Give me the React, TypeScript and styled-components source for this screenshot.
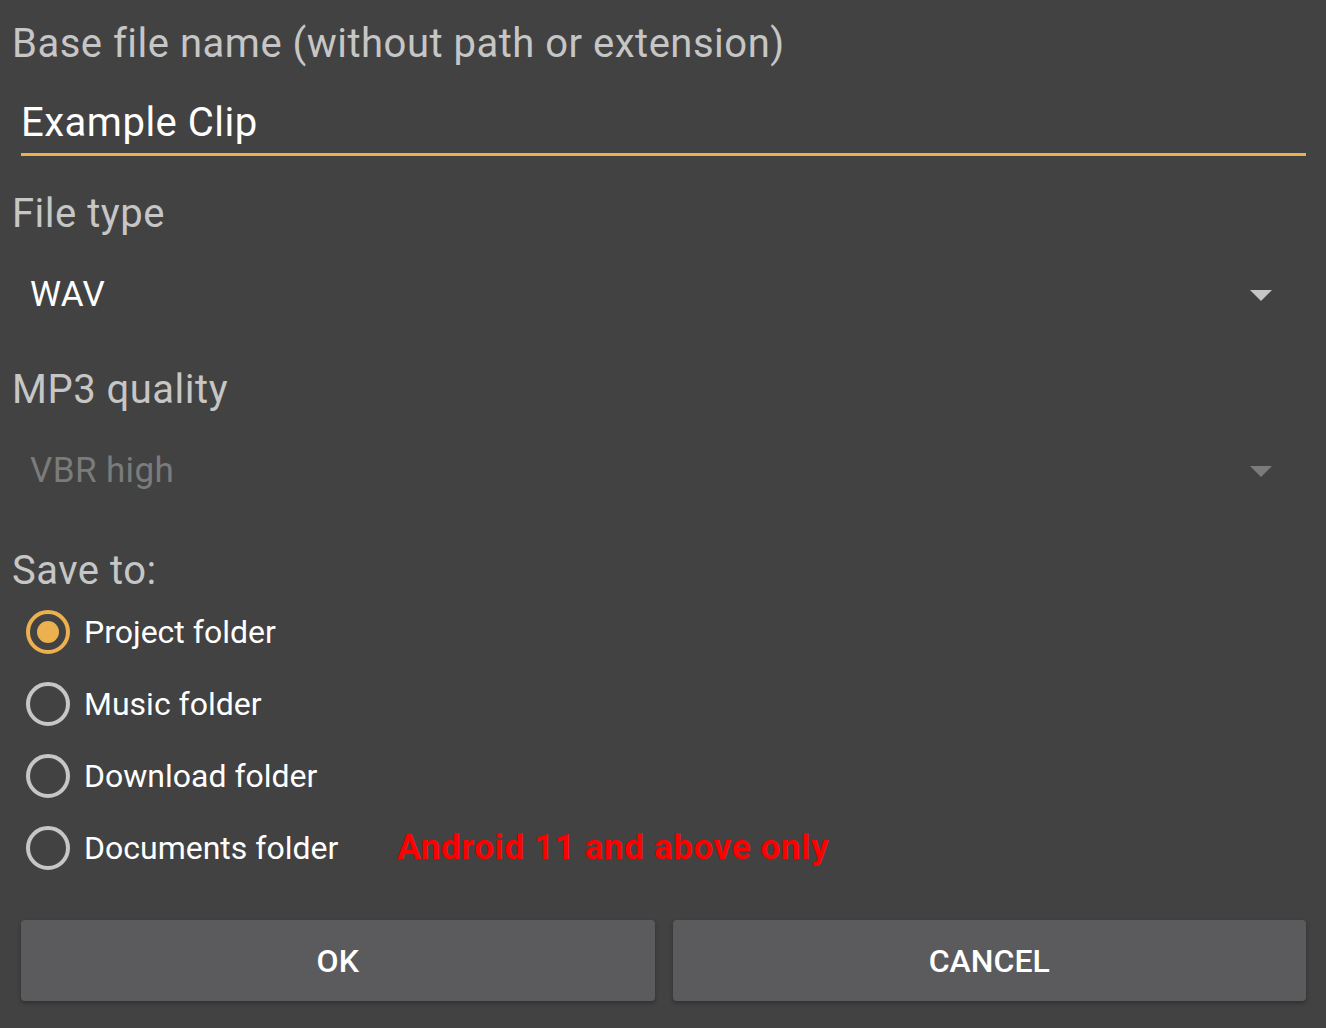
import React from 'react';
import styled, { createGlobalStyle } from 'styled-components';

const GlobalStyle = createGlobalStyle`
  html, body {
    margin: 0;
    padding: 0;
    background: #424242;
  }
  body {
    font-family: Roboto, 'Noto Sans', sans-serif;
  }
`;

const Dialog = styled.div`
  width: 1326px;
  min-height: 1028px;
  box-sizing: border-box;
  padding: 0 20px 0 12px;
  background: #424242;
  display: flex;
  flex-direction: column;
`;

const FieldLabel = styled.div<{ $top: number }>`
  margin-top: ${(p) => p.$top}px;
  font-size: 40px;
  letter-spacing: 0.5px;
  line-height: 46px;
  color: #c6c6c6;
`;

const NameInput = styled.div`
  margin: 33px 0 0 9px;
  font-size: 40px;
  letter-spacing: 0.5px;
  line-height: 46px;
  color: #ffffff;
  padding-bottom: 7px;
  border-bottom: 3px solid #ecb04e;
`;

const Spinner = styled.div<{ $disabled?: boolean }>`
  margin: 18px 0 0 9px;
  height: 80px;
  padding: 0 34px 0 9px;
  display: flex;
  align-items: center;
  justify-content: space-between;
  font-size: 35px;
  letter-spacing: 0.4px;
  line-height: 40px;
  color: ${(p) => (p.$disabled ? '#7b7b7b' : '#ffffff')};
`;

const RadioGroup = styled.div`
  margin: 2px 0 0 14px;
  display: flex;
  flex-direction: column;
`;

const RadioRow = styled.div`
  height: 72px;
  display: flex;
  align-items: center;
`;

const RadioCircle = styled.span<{ $checked?: boolean }>`
  width: 44px;
  height: 44px;
  box-sizing: border-box;
  border-radius: 50%;
  border: 4px solid ${(p) => (p.$checked ? '#ecb04e' : '#c6c6c6')};
  display: flex;
  align-items: center;
  justify-content: center;
  flex-shrink: 0;
  &::after {
    content: '';
    display: ${(p) => (p.$checked ? 'block' : 'none')};
    width: 22px;
    height: 22px;
    border-radius: 50%;
    background: #ecb04e;
  }
`;

const RadioText = styled.span`
  margin-left: 14px;
  font-size: 32px;
  line-height: 40px;
  color: #ffffff;
`;

const Note = styled.span`
  margin-left: 59px;
  font-size: 35px;
  font-weight: 700;
  letter-spacing: 0.6px;
  line-height: 40px;
  color: #ff0000;
`;

const ButtonBar = styled.div`
  margin: 36px 0 0 9px;
  display: grid;
  grid-template-columns: 1fr 1fr;
  gap: 18px;
`;

const DialogButton = styled.button`
  height: 81px;
  border: none;
  border-radius: 4px;
  background: #5b5b5d;
  box-shadow: 0 2px 4px rgba(0, 0, 0, 0.3);
  color: #ffffff;
  font-family: Roboto, sans-serif;
  font-size: 32px;
  font-weight: 500;
  text-transform: uppercase;
  cursor: pointer;
`;

const Arrow = ({ color }: { color: string }) => (
  <svg width="22" height="11" viewBox="0 0 22 11">
    <polygon points="0,0 22,0 11,11" fill={color} />
  </svg>
);

const folders = ['Project folder', 'Music folder', 'Download folder', 'Documents folder'];

export default function App() {
  return (
    <Dialog>
      <GlobalStyle />
      <FieldLabel $top={21}>Base file name (without path or extension)</FieldLabel>
      <NameInput>Example Clip</NameInput>

      <FieldLabel $top={35}>File type</FieldLabel>
      <Spinner>
        <span>WAV</span>
        <Arrow color="#c6c6c6" />
      </Spinner>

      <FieldLabel $top={32}>MP3 quality</FieldLabel>
      <Spinner $disabled>
        <span>VBR high</span>
        <Arrow color="#7b7b7b" />
      </Spinner>

      <FieldLabel $top={37}>Save to:</FieldLabel>
      <RadioGroup>
        {folders.map((name, i) => (
          <RadioRow key={name}>
            <RadioCircle $checked={i === 0} />
            <RadioText>{name}</RadioText>
            {i === 3 && <Note>Android 11 and above only</Note>}
          </RadioRow>
        ))}
      </RadioGroup>

      <ButtonBar>
        <DialogButton>OK</DialogButton>
        <DialogButton>Cancel</DialogButton>
      </ButtonBar>
    </Dialog>
  );
}
